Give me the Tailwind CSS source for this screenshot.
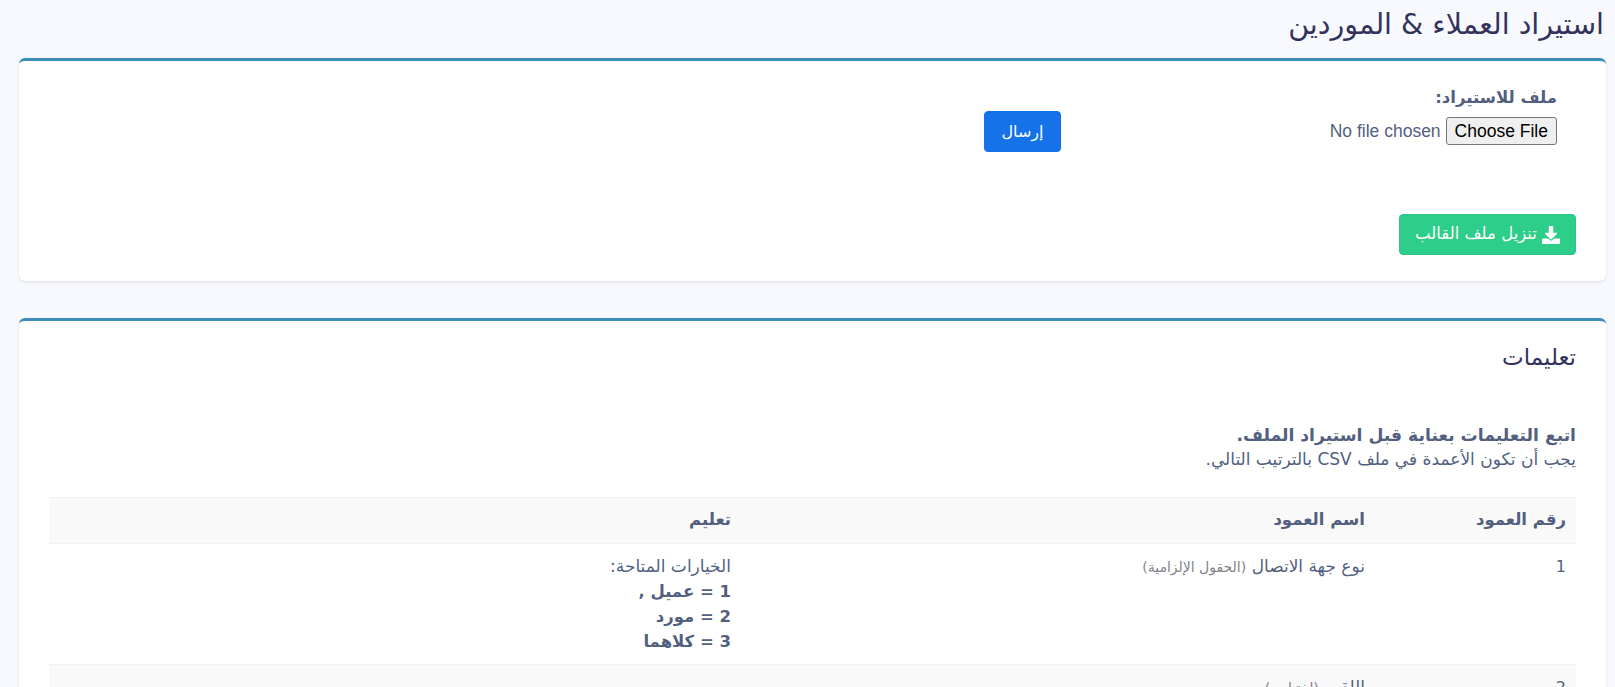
<!DOCTYPE html>
<html lang="ar" dir="rtl">
<head>
    <meta charset="UTF-8">
    <meta name="viewport" content="width=device-width, initial-scale=1.0">
    <title>استيراد العملاء & الموردين</title>
    <script src="https://cdn.jsdelivr.net/npm/@tailwindcss/browser@4"></script>
</head>
<body class="h-[687px] overflow-hidden bg-[#f8f9fe] font-['DejaVu_Sans','Liberation_Sans',sans-serif] text-[17px] text-[#525f7f]">
    <div class="pr-[9px] pl-[19px]">
        <!-- Page title -->
        <h1 class="h-[58px] pt-[5px] pr-[2px] text-[28.5px] leading-[40px] text-[#32325d]">استيراد العملاء &amp; الموردين</h1>

        <!-- Import form -->
        <div class="h-[223px] rounded-md border-t-[3px] border-[#3c8dbc] bg-white shadow-sm">
            <div class="flex h-[153px] pt-[24px] pr-[49px]">
                <div class="w-[496px]">
                    <label class="block text-[16.5px] leading-[26px] font-bold">ملف للاستيراد:</label>
                    <input type="file" class="mt-[6px] block font-['Liberation_Sans',sans-serif] text-[17.5px] [&::file-selector-button]:me-[5px] [&::file-selector-button]:h-[28px] [&::file-selector-button]:rounded-[3px] [&::file-selector-button]:border [&::file-selector-button]:border-[#767676] [&::file-selector-button]:bg-[#efefef] [&::file-selector-button]:px-[8px] [&::file-selector-button]:text-black">
                </div>
                <div class="pt-[26px]">
                    <button class="h-[41px] w-[77px] rounded border border-[#1170e8] bg-[#1572e8] text-[16px] text-white">إرسال</button>
                </div>
            </div>
            <div class="pr-[30px]">
                <button class="flex h-[41px] w-[177px] items-center justify-center gap-[5px] rounded border border-[#2bc486] bg-[#2dce89] text-[16.5px] text-white">
                    <svg class="h-[18px] w-[18px]" viewBox="0 0 512 512" fill="currentColor"><path d="M216 0h80c13.300 0 24 10.700 24 24v168h87.700c17.800 0 26.700 21.500 14.100 34.100L269.700 378.300c-7.500 7.500-19.800 7.500-27.300 0L90.100 226.100c-12.600-12.600-3.700-34.100 14.100-34.100H192V24c0-13.300 10.700-24 24-24zm296 376v112c0 13.300-10.700 24-24 24H24c-13.300 0-24-10.700-24-24V376c0-13.300 10.700-24 24-24h146.700l49 49c20.100 20.100 52.500 20.100 72.600 0l49-49H488c13.300 0 24 10.700 24 24z"/></svg>
                    <span>تنزيل ملف القالب</span>
                </button>
            </div>
        </div>

        <!-- Instructions -->
        <div class="mt-[37px] rounded-md border-t-[3px] border-[#3c8dbc] bg-white px-[30px] shadow-sm">
            <h3 class="pt-[21px] text-[23px] leading-[30px] text-[#32325d]">تعليمات</h3>
            <p class="mt-[51px] text-[17.2px] leading-[24px]"><strong>اتبع التعليمات بعناية قبل استيراد الملف.</strong></p>
            <p class="text-[17px] leading-[25px]">يجب أن تكون الأعمدة في ملف CSV بالترتيب التالي.</p>
            <table class="mt-[25px] w-full table-fixed border-collapse">
                <thead>
                    <tr class="h-[46px] border-y border-[#f2f2f2] bg-[#f9f9f9] text-right text-[16.5px]">
                        <th class="w-[201px] px-[10px] font-bold">رقم العمود</th>
                        <th class="w-[634px] px-[10px] font-bold">اسم العمود</th>
                        <th class="px-[10px] font-bold">تعليم</th>
                    </tr>
                </thead>
                <tbody>
                    <tr class="h-[121px] border-b border-[#f2f2f2] align-top">
                        <td class="px-[10px] pt-[10px] text-[16px] leading-[25px]">1</td>
                        <td class="px-[10px] pt-[10px] leading-[25px]">نوع جهة الاتصال <small class="text-[14px] text-[#7f8389]">(الحقول الإلزامية)</small></td>
                        <td class="px-[10px] pt-[10px] leading-[25px]">
                            الخيارات المتاحة:<br>
                            <strong class="text-[16.5px]">1 = عميل ,</strong><br>
                            <strong class="text-[16.5px]">2 = مورد</strong><br>
                            <strong class="text-[16.5px]">3 = كلاهما</strong>
                        </td>
                    </tr>
                    <tr class="bg-[#f9f9f9] align-top">
                        <td class="px-[10px] pt-[10px] text-[16px] leading-[25px]">2</td>
                        <td class="px-[10px] pt-[10px] leading-[25px]">اللقب <small class="text-[14px] text-[#7f8389]">(اختياري)</small></td>
                        <td class="px-[10px] pt-[10px]"></td>
                    </tr>
                </tbody>
            </table>
        </div>
    </div>
</body>
</html>
